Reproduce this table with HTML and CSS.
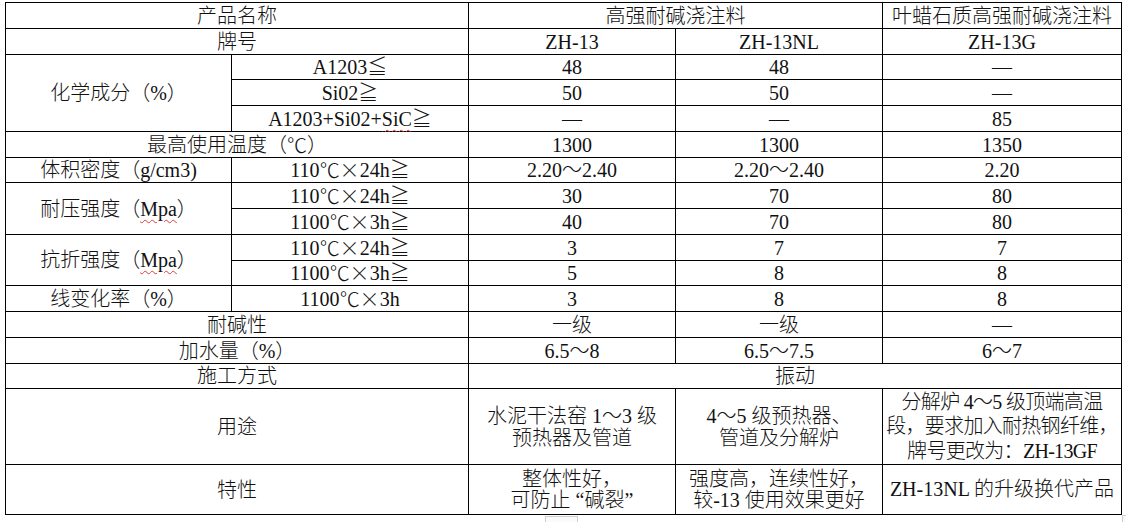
FILE: index.html
```html
<!DOCTYPE html>
<html lang="zh-CN">
<head>
<meta charset="utf-8">
<title>产品参数表</title>
<link rel="stylesheet" href="styles.css">
</head>
<body>
<div class="page">
  <div class="sheet">
    <div class="c w2">产品名称</div>
    <div class="c w2">高强耐碱浇注料</div>
    <div class="c">叶蜡石质高强耐碱浇注料</div>

    <div class="c w2">牌号</div>
    <div class="c">ZH-13</div>
    <div class="c">ZH-13NL</div>
    <div class="c">ZH-13G</div>

    <div class="c h3">化学成分（%）</div>
    <div class="c">A1203≦</div>
    <div class="c">48</div>
    <div class="c">48</div>
    <div class="c">—</div>
    <div class="c">Si02≧</div>
    <div class="c">50</div>
    <div class="c">50</div>
    <div class="c">—</div>
    <div class="c">A1203+Si02+<span class="typo">SiC</span>≧</div>
    <div class="c">—</div>
    <div class="c">—</div>
    <div class="c">85</div>

    <div class="c w2">最高使用温度（<span class="cj">℃</span>）</div>
    <div class="c">1300</div>
    <div class="c">1300</div>
    <div class="c">1350</div>

    <div class="c">体积密度（g/cm3)</div>
    <div class="c">110<span class="cj">℃×</span>24h≧</div>
    <div class="c">2.20～2.40</div>
    <div class="c">2.20～2.40</div>
    <div class="c">2.20</div>

    <div class="c h2">耐压强度（<span class="typo">Mpa</span>）</div>
    <div class="c">110<span class="cj">℃×</span>24h≧</div>
    <div class="c">30</div>
    <div class="c">70</div>
    <div class="c">80</div>
    <div class="c">1100<span class="cj">℃×</span>3h≧</div>
    <div class="c">40</div>
    <div class="c">70</div>
    <div class="c">80</div>

    <div class="c h2">抗折强度（<span class="typo">Mpa</span>）</div>
    <div class="c">110<span class="cj">℃×</span>24h≧</div>
    <div class="c">3</div>
    <div class="c">7</div>
    <div class="c">7</div>
    <div class="c">1100<span class="cj">℃×</span>3h≧</div>
    <div class="c">5</div>
    <div class="c">8</div>
    <div class="c">8</div>

    <div class="c">线变化率（%）</div>
    <div class="c">1100<span class="cj">℃×</span>3h</div>
    <div class="c">3</div>
    <div class="c">8</div>
    <div class="c">8</div>

    <div class="c w2">耐碱性</div>
    <div class="c">一级</div>
    <div class="c">一级</div>
    <div class="c">—</div>

    <div class="c w2">加水量（%）</div>
    <div class="c">6.5～8</div>
    <div class="c">6.5～7.5</div>
    <div class="c">6～7</div>

    <div class="c w2">施工方式</div>
    <div class="c w3">振动</div>

    <div class="c w2">用途</div>
    <div class="c">水泥干法窑 1～3 级<br>预热器及管道</div>
    <div class="c">4～5 级预热器、<br>管道及分解炉</div>
    <div class="c loose">分解炉 4～5 级顶端高温<br>段，要求加入耐热钢纤维，<br>牌号更改为：ZH-13GF</div>

    <div class="c w2">特性</div>
    <div class="c tight">整体性好，<br>可防止 “碱裂”</div>
    <div class="c tight">强度高，连续性好，<br>较-13 使用效果更好</div>
    <div class="c tight">ZH-13NL 的升级换代产品</div>
  </div>
  <div class="handle"></div>
  <div class="handle handle-right"></div>
</div>
</body>
</html>
```

FILE: styles.css
```css
html, body {
  margin: 0;
  padding: 0;
  background: #ffffff;
}

body {
  font-family: "Liberation Serif", "Noto Sans CJK SC", serif;
  font-size: 20px;
  color: #111111;
}

.page {
  position: relative;
  width: 1126px;
  height: 522px;
  overflow: hidden;
}

.sheet {
  display: grid;
  grid-template-columns: 225px 236px 206px 206px 238px;
  grid-template-rows: 25px 25px 24px 25px 25px 25px 24px 25px 25px 25px 24px 25px 25px 25px 24px 75px 49px;
  gap: 1px;
  padding: 1px;
  background: #000000;
  width: max-content;
  margin: 2px 0 0 5px;
}

.c {
  background: #ffffff;
  display: flex;
  align-items: center;
  justify-content: center;
  text-align: center;
  line-height: 22px;
  white-space: nowrap;
  font-weight: 300;
}

.w2 { grid-column: span 2; }
.w3 { grid-column: span 3; }
.h2 { grid-row: span 2; }
.h3 { grid-row: span 3; }

.loose {
  line-height: 24.5px;
  letter-spacing: -0.7px;
}

.tight { line-height: 21px; }

.cj {
  font-family: "Noto Sans CJK SC", sans-serif;
}

.typo {
  text-decoration: underline wavy #e23b3b;
  text-decoration-thickness: 1px;
  text-underline-offset: 3px;
}

.handle {
  position: absolute;
  left: 545px;
  top: 516px;
  width: 33px;
  height: 10px;
  border: 1px solid #cfcfcf;
  box-sizing: border-box;
  background: #fafafa;
}

.handle-right {
  left: 1122px;
  top: 515px;
  width: 8px;
}
```
